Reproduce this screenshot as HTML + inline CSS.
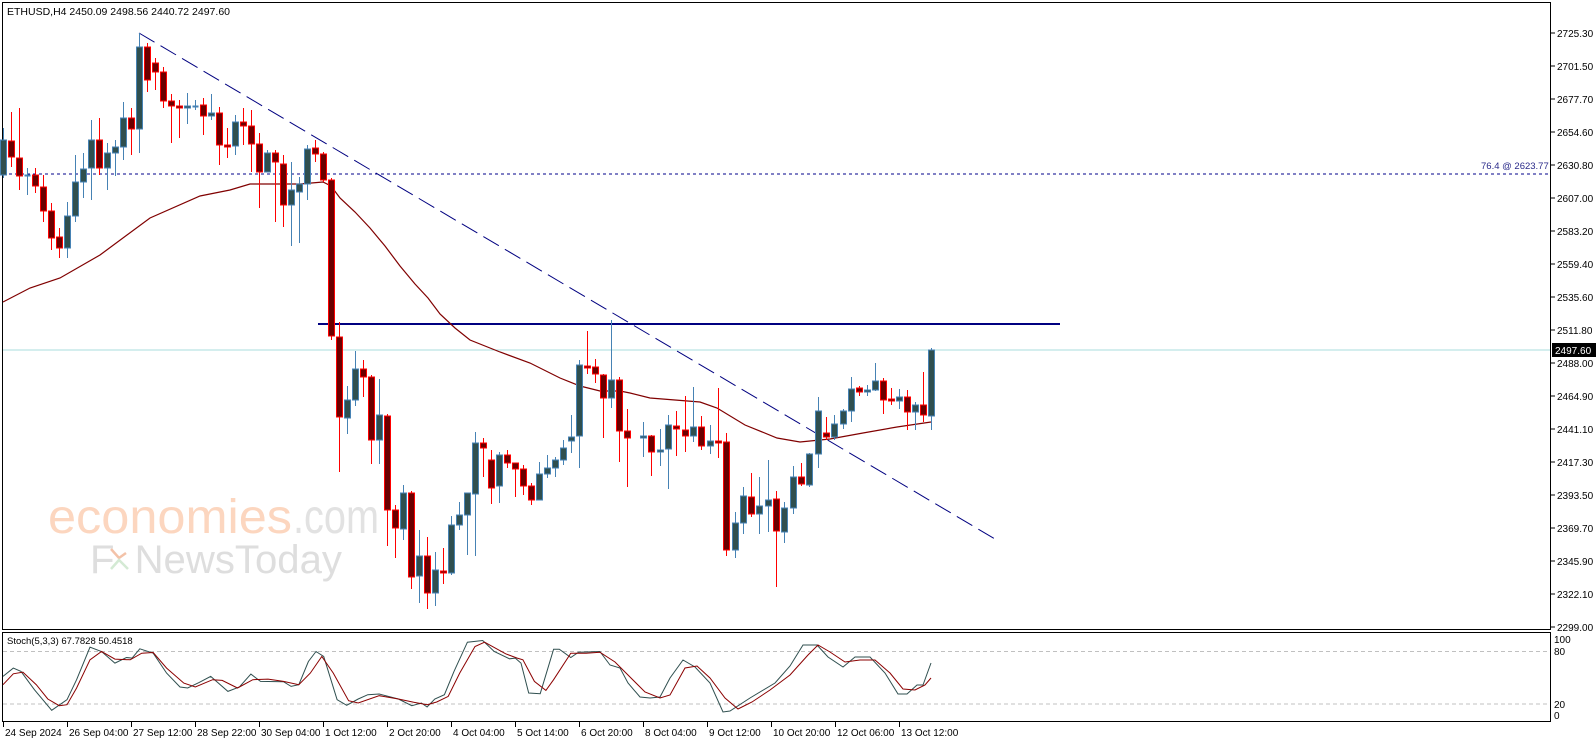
<!DOCTYPE html>
<html><head><meta charset="utf-8"><style>
html,body{margin:0;padding:0;background:#fff;width:1596px;height:743px;overflow:hidden}
svg{display:block}
text{font-family:"Liberation Sans",sans-serif}
</style></head><body>
<svg id="s" width="1596" height="743" viewBox="0 0 1596 743" xmlns="http://www.w3.org/2000/svg">
<rect x="0" y="0" width="1596" height="743" fill="#fff"/>
<!-- watermark -->
<text x="48" y="533" font-size="48" fill="#fcd6bf" textLength="244" lengthAdjust="spacingAndGlyphs">economies</text>
<text x="293" y="533" font-size="48" fill="#e2e2e2" textLength="86" lengthAdjust="spacingAndGlyphs">.com</text>
<text x="90" y="573" font-size="40" fill="#dedede" textLength="252" lengthAdjust="spacingAndGlyphs">F<tspan fill="#fff">x</tspan>NewsToday</text>
<path d="M111 549 L119 558 L126 553" stroke="#f3c2a8" stroke-width="2.5" fill="none"/>
<path d="M111 569 L119 560 L128 569" stroke="#d4ead4" stroke-width="2.5" fill="none"/>
<!-- frames -->
<rect x="2.5" y="2.5" width="1548" height="627" fill="none" stroke="#000" stroke-width="1"/>
<rect x="2.5" y="632.5" width="1548" height="89" fill="none" stroke="#000" stroke-width="1"/>
<!-- lines -->
<line x1="3" y1="174" x2="1550" y2="174" stroke="#00008b" stroke-dasharray="3 3" stroke-width="1"/>
<text x="1481" y="169" font-size="9.5" fill="#2b2b8a">76.4 @ 2623.77</text>
<line x1="3" y1="350" x2="1550" y2="350" stroke="#a8dcdc" stroke-width="1"/>
<line x1="318" y1="324" x2="1060" y2="324" stroke="#000080" stroke-width="2"/>
<line x1="139" y1="33" x2="995" y2="539" stroke="#000080" stroke-width="1" stroke-dasharray="18 7"/>
<!-- MA -->
<polyline fill="none" stroke="#800000" stroke-width="1.2" points="3,302 30,288 60,278 100,255 150,218 200,196 230,190 250,184 280,184 300,184 323,182 331,186 340,198 355,212 370,228 385,246 400,266 415,284 428,298 440,314 455,328 470,340 500,352 530,363 560,378 580,386 600,391 620,391 630,393 650,398 700,402 717,408 745,425 777,438 800,442 830,439 863,433 897,427 931,422"/>
<g id="c"></g>
<!-- axis -->
<g font-size="10" fill="#000" id="ax"></g>
<rect x="1552" y="343" width="44" height="14" fill="#000"/>
<text x="1555" y="354" font-size="10" fill="#fff">2497.60</text>
<!-- stoch -->
<text x="7" y="644" font-size="9.5" fill="#000">Stoch(5,3,3) 67.7828 50.4518</text>
<line x1="3" y1="651.5" x2="1550" y2="651.5" stroke="#c0c0c0" stroke-dasharray="4 3"/>
<line x1="3" y1="704" x2="1550" y2="704" stroke="#c0c0c0" stroke-dasharray="4 3"/>
<g font-size="10" fill="#000"><text x="1554" y="643">100</text><text x="1554" y="655">80</text><text x="1554" y="708">20</text><text x="1554" y="719">0</text></g>
<polyline id="g1" fill="none" stroke="#2f4f4f" stroke-width="1"/>
<polyline id="r1" fill="none" stroke="#8b0000" stroke-width="1"/>
<g id="tl" font-size="10" fill="#000"></g>
<text x="7" y="15" font-size="10.5" fill="#000">ETHUSD,H4  2450.09 2498.56 2440.72 2497.60</text>
</svg>
<script>
var NS="http://www.w3.org/2000/svg";
function el(p,n,a,t){var e=document.createElementNS(NS,n);for(var k in a)e.setAttribute(k,a[k]);if(t)e.textContent=t;p.appendChild(e);return e;}
var A=[[140,175,128,178,1],[141,157,112,167,0],[158,176,108,190,0],[175,176,168,195,1],[175,186,168,193,0],[187,211,175,222,0],[211,238,203,250,0],[237,248,228,258,0],[216,248,202,258,1],[182,216,155,222,1],[169,182,153,198,1],[140,168,120,200,1],[140,168,118,175,0],[153,168,143,190,1],[147,153,140,176,1],[118,147,102,160,1],[118,129,108,155,0],[47,129,33,153,1],[47,80,43,92,0],[63,72,58,90,0],[72,101,67,108,0],[101,106,94,143,0],[106,108,100,138,0],[106,108,93,124,1],[106,107,100,110,1],[105,116,98,135,0],[113,116,94,120,1],[113,145,107,165,0],[145,147,128,158,0],[122,146,115,155,1],[122,126,108,145,0],[126,144,110,172,0],[144,172,133,208,0],[153,172,150,172,1],[153,162,150,222,0],[164,205,155,227,0],[190,205,162,246,1],[184,192,177,243,1],[149,184,145,200,1],[148,154,140,162,0],[154,180,152,182,0],[180,336,178,340,0]];
var B=[[337,417,322,472,0],[400,418,386,434,1],[369,400,351,406,1],[369,377,360,397,0],[377,440,375,464,0],[415,440,379,464,1],[416,510,414,546,0],[510,528,505,558,0],[493,529,485,540,1],[493,577,491,589,0],[556,576,530,603,1],[556,593,537,609,0],[570,593,552,606,1],[571,573,548,584,0],[525,573,516,575,1],[515,525,502,530,1],[493,515,498,555,1],[443,494,432,556,1],[443,448,438,477,0],[460,488,450,504,0],[455,486,452,503,1],[455,463,450,468,0],[463,469,465,497,0],[469,486,465,495,0],[486,500,483,505,0],[474,500,462,500,1],[468,474,455,478,1],[460,468,457,477,1],[448,460,440,465,1],[437,441,415,453,1],[365,436,360,468,1],[366,368,331,374,0],[367,374,359,383,0],[375,398,374,438,0],[380,398,320,408,1],[380,431,377,462,0],[431,438,409,487,0]];
var C=[[436,438,422,457,1],[436,452,435,476,0],[450,452,429,466,1],[425,449,415,489,1],[426,429,411,456,0],[430,436,396,452,0],[427,436,387,442,1],[427,446,416,450,0],[441,446,425,454,1],[441,443,388,458,0],[442,550,433,556,0],[523,550,512,558,1],[496,523,487,534,1],[497,514,473,517,0],[506,514,477,534,1],[500,506,460,532,1],[499,531,491,587,0],[508,532,502,543,1],[477,508,466,514,1],[477,484,463,486,0],[454,485,453,487,1],[411,454,397,468,1],[433,437,417,440,0],[424,437,415,440,1],[411,424,409,429,1],[389,411,377,422,1]];
var D=[[388,392,386,396,0],[390,392,385,396,1],[381,390,363,391,1],[381,400,378,414,0],[399,401,388,405,0],[397,401,389,409,1],[397,412,390,430,0],[405,412,402,430,1],[405,415,372,422,0],[350,416,348,430,1]];
var g=document.getElementById("c");
function draw(arr,x0,x1){var n=arr.length;for(var i=0;i<n;i++){var x=Math.round(n>1?x0+(x1-x0)*i/(n-1):x0)+0.5;var d=arr[i];var wc=d[4]?"#4682b4":"#ff0000";var fc=d[4]?"#2f4f4f":"#6b0000";
el(g,"line",{x1:x,y1:d[2],x2:x,y2:d[3],stroke:wc,"stroke-width":1});
var h=d[1]-d[0];if(h<2){el(g,"line",{x1:x-3,y1:d[0]+0.5,x2:x+3,y2:d[0]+0.5,stroke:wc,"stroke-width":2});}
else el(g,"rect",{x:x-3,y:d[0],width:6,height:h,fill:fc,stroke:wc,"stroke-width":1});}}
draw(A,3,331);draw(B,339,627);draw(C,643,851);draw(D,859,931);
var ax=document.getElementById("ax");
var L=["2725.30","2701.50","2677.70","2654.60","2630.80","2607.00","2583.20","2559.40","2535.60","2511.80","2488.00","2464.90","2441.10","2417.30","2393.50","2369.70","2345.90","2322.10","2299.00"];
for(var i=0;i<L.length;i++){var y=33+i*33.0;el(ax,"line",{x1:1551,y1:y,x2:1555,y2:y,stroke:"#000"});el(ax,"text",{x:1557,y:y+4},L[i]);}
var T=["24 Sep 2024","26 Sep 04:00","27 Sep 12:00","28 Sep 22:00","30 Sep 04:00","1 Oct 12:00","2 Oct 20:00","4 Oct 04:00","5 Oct 14:00","6 Oct 20:00","8 Oct 04:00","9 Oct 12:00","10 Oct 20:00","12 Oct 06:00","13 Oct 12:00"];
var tl=document.getElementById("tl");
for(var i=0;i<T.length;i++){var x=3+64*i;el(tl,"line",{x1:x+0.5,y1:722,x2:x+0.5,y2:727,stroke:"#000"});el(tl,"text",{x:x+2,y:736},T[i]);}
function pts(a,b){return a.map(function(p){return(((p[0]-8)/2.61+3).toFixed(1))+","+((651.5+(p[1]-125)/3.01).toFixed(1));}).join(" ")+" "+b;}
var G=[[8,200],[35,175],[55,185],[90,240],[135,302],[175,270],[200,210],[235,112],[265,125],[300,160],[330,143],[345,145],[365,117],[400,130],[435,190],[470,232],[490,235],[520,218],[550,200],[595,245],[625,232],[655,193],[680,215],[740,216],[760,230],[780,225],[805,155],[825,125],[845,140],[880,270],[905,287],[935,268],[960,255],[990,253],[1040,268],[1075,288],[1100,280],[1115,292],[1135,268],[1160,255],[1185,185],[1220,97],[1260,92],[1290,125],[1330,147],[1345,145],[1360,160],[1380,250],[1410,252],[1445,118],[1460,118],[1490,143],[1510,127],[1566,125]];
var R=[[8,225],[35,192],[60,187],[95,225],[125,268],[155,288],[175,285],[200,235],[235,150],[265,125],[300,148],[340,150],[370,130],[400,128],[435,175],[480,220],[510,232],[555,210],[580,212],[620,235],[660,210],[700,208],[740,215],[780,225],[810,190],[840,140],[870,190],[910,273],[935,280],[990,258],[1040,268],[1080,278],[1115,285],[1140,277],[1170,260],[1200,190],[1240,110],[1265,97],[1320,132],[1350,145],[1365,150],[1395,215],[1425,242],[1445,210],[1490,130],[1530,130],[1566,127]];
document.getElementById("g1").setAttribute("points",pts(G,"610,665 620,668 628,683 640,697 650,698 660,697 670,678 683,660 695,667 710,683 723,712 730,711 750,698 775,683 790,666 803,645 817,645 828,657 843,667 855,657 870,657 885,673 898,694 907,694 917,685 923,685 931,663"));
document.getElementById("r1").setAttribute("points",pts(R,"615,662 630,677 645,692 660,698 670,695 685,668 697,666 710,678 725,698 738,709 752,702 770,690 790,675 808,655 818,645 830,652 845,662 860,660 875,660 890,673 903,689 915,690 925,685 931,678"));
</script>
</body></html>
